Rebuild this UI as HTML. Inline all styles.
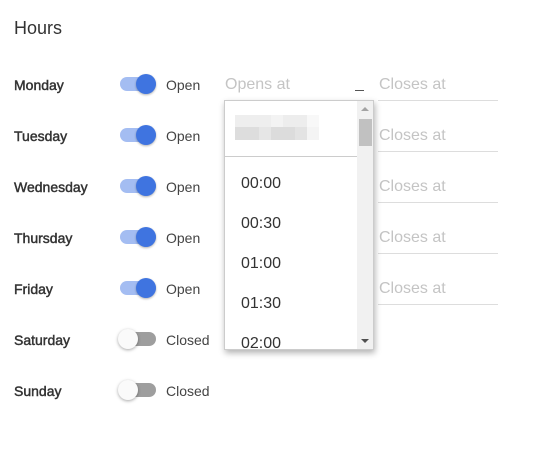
<!DOCTYPE html>
<html><head><style>
body{margin:0;width:534px;height:456px;background:#fff;font-family:"Liberation Sans",Arial,sans-serif;position:relative;overflow:hidden}
.a{position:absolute}
.day{left:14px;font-size:14px;color:#333;-webkit-text-stroke:0.45px #333}
.st{left:166px;font-size:14px;color:#444}
.track{left:120px;width:36px;height:14px;border-radius:7px}
.thumb{width:20px;height:20px;border-radius:50%}
.ph{font-size:16px;color:#c4c4c4}
.ul{height:1px;background:#ddd}
.it{left:241px;font-size:16px;color:#333}
</style></head><body>
<div class="a" style="left:14px;top:18px;font-size:18px;color:#333">Hours</div>

<div class="a day" style="top:77px">Monday</div>
<div class="a day" style="top:128px">Tuesday</div>
<div class="a day" style="top:179px">Wednesday</div>
<div class="a day" style="top:230px">Thursday</div>
<div class="a day" style="top:281px">Friday</div>
<div class="a day" style="top:332px">Saturday</div>
<div class="a day" style="top:383px">Sunday</div>

<div class="a track" style="top:77px;background:#a4bdf2"></div><div class="a thumb" style="left:136px;top:74px;background:#3f74e0;box-shadow:0 1px 2px rgba(0,0,0,.3)"></div>
<div class="a track" style="top:128px;background:#a4bdf2"></div><div class="a thumb" style="left:136px;top:125px;background:#3f74e0;box-shadow:0 1px 2px rgba(0,0,0,.3)"></div>
<div class="a track" style="top:179px;background:#a4bdf2"></div><div class="a thumb" style="left:136px;top:176px;background:#3f74e0;box-shadow:0 1px 2px rgba(0,0,0,.3)"></div>
<div class="a track" style="top:230px;background:#a4bdf2"></div><div class="a thumb" style="left:136px;top:227px;background:#3f74e0;box-shadow:0 1px 2px rgba(0,0,0,.3)"></div>
<div class="a track" style="top:281px;background:#a4bdf2"></div><div class="a thumb" style="left:136px;top:278px;background:#3f74e0;box-shadow:0 1px 2px rgba(0,0,0,.3)"></div>
<div class="a track" style="top:332px;background:#9e9e9e"></div><div class="a thumb" style="left:118px;top:329px;background:#fafafa;box-shadow:0 1px 3px rgba(0,0,0,.35)"></div>
<div class="a track" style="top:383px;background:#9e9e9e"></div><div class="a thumb" style="left:118px;top:380px;background:#fafafa;box-shadow:0 1px 3px rgba(0,0,0,.35)"></div>

<div class="a st" style="top:77px">Open</div>
<div class="a st" style="top:128px">Open</div>
<div class="a st" style="top:179px">Open</div>
<div class="a st" style="top:230px">Open</div>
<div class="a st" style="top:281px">Open</div>
<div class="a st" style="top:332px">Closed</div>
<div class="a st" style="top:383px">Closed</div>

<div class="a ph" style="left:225px;top:76px">Opens at</div>
<div class="a" style="left:355px;top:90px;width:9px;height:1px;background:#555"></div>

<div class="a ph" style="left:379px;top:76px">Closes at</div><div class="a ul" style="left:378px;top:100px;width:120px"></div>
<div class="a ph" style="left:379px;top:127px">Closes at</div><div class="a ul" style="left:378px;top:151px;width:120px"></div>
<div class="a ph" style="left:379px;top:178px">Closes at</div><div class="a ul" style="left:378px;top:202px;width:120px"></div>
<div class="a ph" style="left:379px;top:229px">Closes at</div><div class="a ul" style="left:378px;top:253px;width:120px"></div>
<div class="a ph" style="left:379px;top:280px">Closes at</div><div class="a ul" style="left:378px;top:304px;width:120px"></div>

<div class="a" style="left:224px;top:100px;width:148px;height:248px;background:#fff;border:1px solid #ccc;box-shadow:1px 3px 6px rgba(0,0,0,.3);overflow:hidden">
  <div class="a" style="left:10px;top:14px;width:84px;height:12px;background:linear-gradient(90deg,#eee 0 36px,#f3f3f3 36px 48px,#ededed 48px 72px,#f8f8f8 72px)"></div>
  <div class="a" style="left:10px;top:26px;width:84px;height:13px;background:linear-gradient(90deg,#ddd 0 24px,#e6e6e6 24px 36px,#dcdcdc 36px 60px,#e3e3e3 60px 72px,#f4f4f4 72px)"></div>
  <div class="a" style="left:0;top:55px;width:132px;height:1px;background:#ccc"></div>
  <div class="a" style="left:132px;top:0;width:16px;height:248px;background:#f1f1f1"></div>
  <div class="a" style="left:134px;top:18px;width:13px;height:27px;background:#c1c1c1"></div>
  <div class="a" style="left:136px;top:6px;width:0;height:0;border-left:4px solid transparent;border-right:4px solid transparent;border-bottom:4px solid #a3a3a3"></div>
  <div class="a" style="left:136px;top:238px;width:0;height:0;border-left:4px solid transparent;border-right:4px solid transparent;border-top:4px solid #505050"></div>
</div>
<div class="a it" style="top:175px">00:00</div>
<div class="a it" style="top:215px">00:30</div>
<div class="a it" style="top:255px">01:00</div>
<div class="a it" style="top:295px">01:30</div>
<div class="a" style="left:225px;top:334px;width:131px;height:15px;overflow:hidden"><div class="a it" style="left:16px;top:1px">02:00</div></div>
</body></html>
